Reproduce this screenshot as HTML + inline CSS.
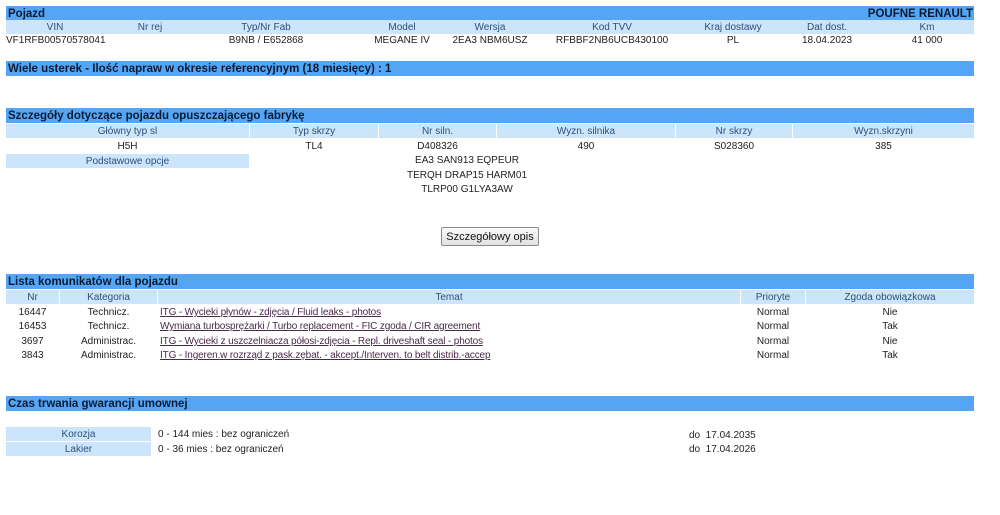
<!DOCTYPE html>
<html><head><meta charset="utf-8"><style>
body{margin:0;width:1000px;height:515px;background:#fff;position:relative;overflow:hidden;font-family:"Liberation Sans",Arial,sans-serif;font-size:10px;color:#222}
div{position:absolute;box-sizing:border-box}
.bar{left:6px;width:968px;height:15px;background:#55a5f5;font-weight:bold;font-size:11.5px;color:#0a1a33;padding-left:2px;line-height:16px}
.lt{background:#cce5fb;height:14px}
.c{text-align:center;line-height:15px;height:14px;white-space:nowrap}
.h{color:#2d4f7a}
a{color:#4a2a4a;text-decoration:underline;letter-spacing:-0.15px}
</style></head><body>
<div class="bar" style="top:6px">Pojazd<span style="position:absolute;right:1px">POUFNE RENAULT</span></div>
<div class="lt" style="left:6px;top:20px;width:968px"></div>
<div class="c h" style="left:6px;width:98px;top:20px">VIN</div>
<div class="c h" style="left:110px;width:80px;top:20px">Nr rej</div>
<div class="c h" style="left:216px;width:100px;top:20px">Typ/Nr Fab</div>
<div class="c h" style="left:352px;width:100px;top:20px">Model</div>
<div class="c h" style="left:440px;width:100px;top:20px">Wersja</div>
<div class="c h" style="left:552px;width:120px;top:20px">Kod TVV</div>
<div class="c h" style="left:683px;width:100px;top:20px">Kraj dostawy</div>
<div class="c h" style="left:777px;width:100px;top:20px">Dat dost.</div>
<div class="c h" style="left:877px;width:100px;top:20px">Km</div>
<div class="c" style="left:6px;top:33px">VF1RFB00570578041</div>
<div class="c" style="left:216px;width:100px;top:33px">B9NB / E652868</div>
<div class="c" style="left:352px;width:100px;top:33px">MEGANE IV</div>
<div class="c" style="left:440px;width:100px;top:33px">2EA3 NBM6USZ</div>
<div class="c" style="left:552px;width:120px;top:33px">RFBBF2NB6UCB430100</div>
<div class="c" style="left:683px;width:100px;top:33px">PL</div>
<div class="c" style="left:777px;width:100px;top:33px">18.04.2023</div>
<div class="c" style="left:877px;width:100px;top:33px">41 000</div>

<div class="bar" style="top:61px">Wiele usterek - Ilość napraw w okresie referencyjnym (18 miesięcy) : 1</div>

<div class="bar" style="top:108px">Szczegóły dotyczące pojazdu opuszczającego fabrykę</div>
<div class="lt c h" style="left:6px;width:243px;top:124px">Główny typ sl</div>
<div class="lt c h" style="left:250px;width:128px;top:124px">Typ skrzy</div>
<div class="lt c h" style="left:379px;width:117px;top:124px">Nr siln.</div>
<div class="lt c h" style="left:497px;width:178px;top:124px">Wyzn. silnika</div>
<div class="lt c h" style="left:676px;width:116px;top:124px">Nr skrzy</div>
<div class="lt c h" style="left:793px;width:181px;top:124px">Wyzn.skrzyni</div>
<div class="c" style="left:6px;width:243px;top:139px">H5H</div>
<div class="c" style="left:250px;width:128px;top:139px">TL4</div>
<div class="c" style="left:379px;width:117px;top:139px">D408326</div>
<div class="c" style="left:497px;width:178px;top:139px">490</div>
<div class="c" style="left:676px;width:116px;top:139px">S028360</div>
<div class="c" style="left:793px;width:181px;top:139px">385</div>
<div class="lt c h" style="left:6px;width:243px;top:154px">Podstawowe opcje</div>
<div class="c" style="left:367px;width:200px;top:153px">EA3 SAN913 EQPEUR</div>
<div class="c" style="left:367px;width:200px;top:168px">TERQH DRAP15 HARM01</div>
<div class="c" style="left:367px;width:200px;top:182px">TLRP00 G1LYA3AW</div>
<div style="left:441px;top:227px;width:98px;height:19px;border:1px solid #8a8a8a;border-radius:2px;background:linear-gradient(#fafafa,#e2e2e2);text-align:center;line-height:18px;font-size:11px;color:#111">Szczegółowy opis</div>

<div class="bar" style="top:274px">Lista komunikatów dla pojazdu</div>
<div class="lt c h" style="left:6px;width:53px;top:290px">Nr</div>
<div class="lt c h" style="left:60px;width:97px;top:290px">Kategoria</div>
<div class="lt c h" style="left:158px;width:582px;top:290px">Temat</div>
<div class="lt c h" style="left:741px;width:64px;top:290px">Prioryte</div>
<div class="lt c h" style="left:806px;width:168px;top:290px">Zgoda obowiązkowa</div>
<div class="c" style="left:6px;width:53px;top:305px">16447</div>
<div class="c" style="left:6px;width:53px;top:319px">16453</div>
<div class="c" style="left:6px;width:53px;top:334px">3697</div>
<div class="c" style="left:6px;width:53px;top:348px">3843</div>
<div class="c" style="left:60px;width:97px;top:305px">Technicz.</div>
<div class="c" style="left:60px;width:97px;top:319px">Technicz.</div>
<div class="c" style="left:60px;width:97px;top:334px">Administrac.</div>
<div class="c" style="left:60px;width:97px;top:348px">Administrac.</div>
<div class="c" style="left:160px;top:305px"><a>ITG - Wycieki płynów - zdjęcia / Fluid leaks - photos</a></div>
<div class="c" style="left:160px;top:319px"><a>Wymiana turbosprężarki / Turbo replacement - FIC zgoda / CIR agreement</a></div>
<div class="c" style="left:160px;top:334px"><a>ITG - Wycieki z uszczelniacza półosi-zdjęcia - Repl. driveshaft seal - photos</a></div>
<div class="c" style="left:160px;top:348px"><a>ITG - Ingeren.w rozrząd z pask.zębat. - akcept./Interven. to belt distrib.-accep</a></div>
<div class="c" style="left:741px;width:64px;top:305px">Normal</div>
<div class="c" style="left:741px;width:64px;top:319px">Normal</div>
<div class="c" style="left:741px;width:64px;top:334px">Normal</div>
<div class="c" style="left:741px;width:64px;top:348px">Normal</div>
<div class="c" style="left:806px;width:168px;top:305px">Nie</div>
<div class="c" style="left:806px;width:168px;top:319px">Tak</div>
<div class="c" style="left:806px;width:168px;top:334px">Nie</div>
<div class="c" style="left:806px;width:168px;top:348px">Tak</div>

<div class="bar" style="top:396px">Czas trwania gwarancji umownej</div>
<div class="lt c h" style="left:6px;width:145px;top:427px">Korozja</div>
<div class="lt c h" style="left:6px;width:145px;top:442px">Lakier</div>
<div class="c" style="left:158px;top:427px">0 - 144 mies : bez ograniczeń</div>
<div class="c" style="left:158px;top:442px">0 - 36 mies : bez ograniczeń</div>
<div class="c" style="left:689px;top:428px">do&nbsp; 17.04.2035</div>
<div class="c" style="left:689px;top:442px">do&nbsp; 17.04.2026</div>
</body></html>
